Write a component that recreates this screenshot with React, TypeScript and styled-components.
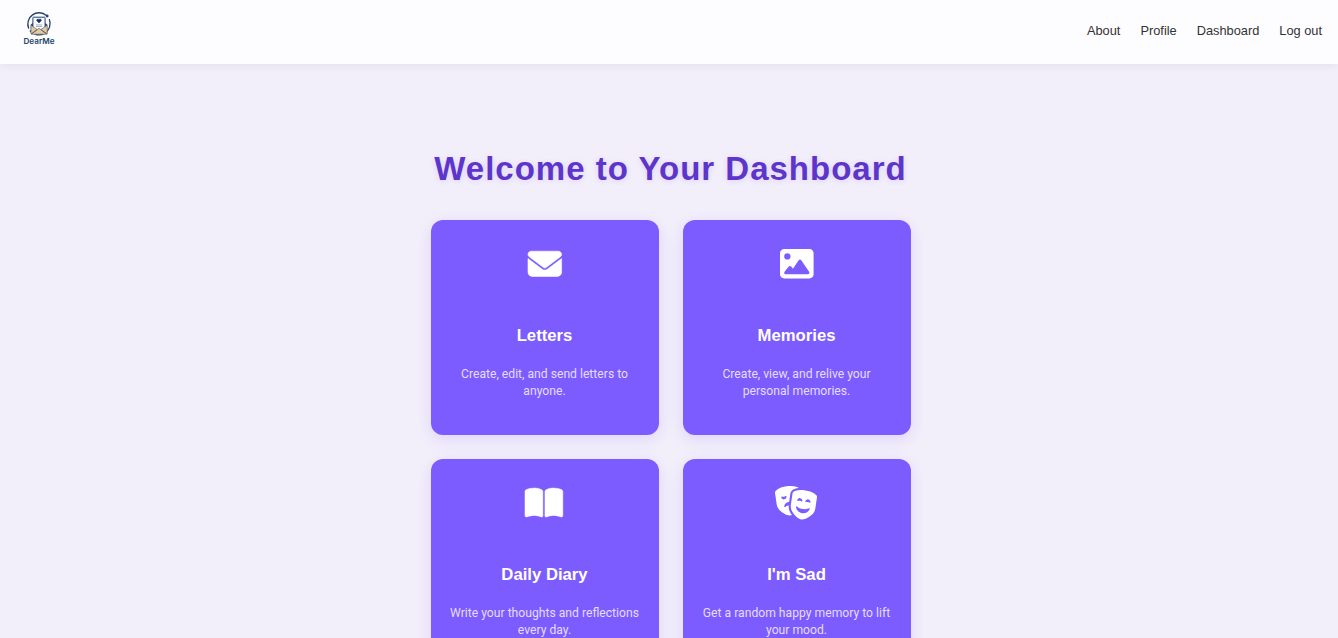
import React from "react";
import styled, { createGlobalStyle } from "styled-components";
import { FaEnvelope, FaImage, FaBookOpen, FaMasksTheater } from "react-icons/fa6";

const GlobalStyle = createGlobalStyle`
  * { box-sizing: border-box; }
  html, body { height: 100%; }
  body {
    margin: 0;
    overflow: hidden;
    background: #f3effa;
    font-family: "Liberation Sans", Arial, sans-serif;
  }
`;

const Header = styled.header`
  display: flex;
  justify-content: space-between;
  height: 64px;
  padding: 0 16px 0 18px;
  background: #fdfdff;
  box-shadow: 0 2px 8px rgba(0, 0, 0, 0.06);
`;

const Brand = styled.a`
  display: block;
  height: 42px;
  margin-top: 6px;
`;

const Nav = styled.nav`
  display: flex;
  gap: 20px;
  height: 61px;
  align-items: center;
`;

const NavLink = styled.a`
  color: #333;
  font-size: 12.8px;
  line-height: 20px;
  text-decoration: none;
`;

const Main = styled.main`
  display: flex;
  flex-direction: column;
  align-items: center;
  padding-top: 85px;
`;

const Heading = styled.h1`
  margin: 0 0 31px 3px;
  color: #5e35cb;
  font-size: 33px;
  font-weight: 700;
  line-height: 40px;
  letter-spacing: 1px;
  text-shadow: 0 1px 6px rgba(124, 92, 255, 0.2);
`;

const Grid = styled.section`
  display: grid;
  grid-template-columns: repeat(2, 228px);
  gap: 24px;
  margin-left: 4px;
`;

const Card = styled.article`
  display: flex;
  flex-direction: column;
  align-items: center;
  height: 215px;
  padding: 26.6px 16px 0;
  border-radius: 12px;
  background: #7c5cff;
  box-shadow: 0 4px 16px rgba(124, 92, 255, 0.18);
  text-align: center;
`;

const IconBox = styled.div<{ $width: number; $stroke: number }>`
  height: 33px;
  margin: 0 1.4px 46.4px 0;
  color: #fff;

  svg {
    display: block;
    width: ${(p) => p.$width}px;
    height: 33.6px;
    overflow: visible;
    stroke-width: ${(p) => p.$stroke};
  }
`;

const CardTitle = styled.h3`
  margin: 0 1px 20px 0;
  color: #fff;
  font-size: 16.7px;
  font-weight: 700;
  line-height: 20px;
`;

const CardText = styled.p`
  margin: 0 1px 0 0;
  color: #e4dcff;
  font-family: Roboto, sans-serif;
  font-size: 12.16px;
  line-height: 17px;
`;

function Logo() {
  return (
    <svg width="42" height="42" viewBox="0 0 42 42" role="img" aria-label="DearMe">
      <g fill="none" stroke="#24436b" strokeLinecap="round">
        <path d="M10.6 22.2A11.3 11.3 0 0 1 28.4 9.4" strokeWidth="1.3" />
        <path d="M31.4 13.6A11.3 11.3 0 0 1 12.2 24.9" strokeWidth="1.3" />
      </g>
      <circle cx="29.2" cy="10" r="1.4" fill="#24436b" />
      <path d="M12.8 18.6 21 12.5 29.2 18.6V27.6H12.8Z" fill="#24436b" />
      <rect x="14.9" y="11.2" width="12.2" height="13" rx=".5" fill="#f8faff" stroke="#24436b" strokeWidth="1" />
      <path d="M21 17 18.9 15a1.2 1.2 0 0 1 2.1-1.5 1.2 1.2 0 0 1 2.1 1.5Z" fill="#173257" stroke="#173257" strokeWidth=".4" />
      <path d="M18 18.9h6M18 20.5h6" stroke="#71839c" strokeWidth=".6" />
      <path d="M13 19.2 19.1 23.5 13 28ZM29.2 19.2 23 23.5 29.2 28ZM13.4 28.2 21 22.3 28.8 28.2Z" fill="#e6c99e" stroke="#4e5968" strokeWidth=".6" strokeLinejoin="round" />
      <text x="21" y="38.1" textAnchor="middle" textLength="31" lengthAdjust="spacingAndGlyphs" fill="#24436b" fontFamily="Inter, sans-serif" fontSize="8" fontWeight="600">DearMe</text>
    </svg>
  );
}

const cards = [
  { icon: FaEnvelope, width: 33.6, stroke: 9, title: "Letters", text: "Create, edit, and send letters to anyone." },
  { icon: FaImage, width: 33.6, stroke: 0, title: "Memories", text: "Create, view, and relive your personal memories." },
  { icon: FaBookOpen, width: 37.8, stroke: 8, title: "Daily Diary", text: "Write your thoughts and reflections every day." },
  { icon: FaMasksTheater, width: 42, stroke: 0, title: "I'm Sad", text: "Get a random happy memory to lift your mood." },
];

export default function App() {
  return (
    <>
      <GlobalStyle />
      <Header>
        <Brand><Logo /></Brand>
        <Nav>
          {["About", "Profile", "Dashboard", "Log out"].map((label) => (
            <NavLink key={label}>{label}</NavLink>
          ))}
        </Nav>
      </Header>
      <Main>
        <Heading>Welcome to Your Dashboard</Heading>
        <Grid>
          {cards.map(({ icon: Icon, width, stroke, title, text }) => (
            <Card key={title}>
              <IconBox $width={width} $stroke={stroke}><Icon /></IconBox>
              <CardTitle>{title}</CardTitle>
              <CardText>{text}</CardText>
            </Card>
          ))}
        </Grid>
      </Main>
    </>
  );
}
